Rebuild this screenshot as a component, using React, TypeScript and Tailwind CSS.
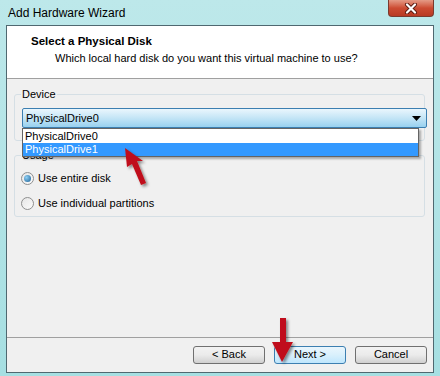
import React from "react";

const Radio = ({ checked }: { checked?: boolean }) => (
  <span className="relative inline-flex w-[13px] h-[13px] rounded-full border border-[#8e8f8f] bg-gradient-to-br from-[#e6e6e6] to-[#fbfbfb] items-center justify-center">
    {checked && (
      <span className="w-[7px] h-[7px] rounded-full bg-[radial-gradient(circle_at_35%_35%,#8fd0f5,#1a5f94)]" />
    )}
  </span>
);

const WinButton = ({ label, focused }: { label: string; focused?: boolean }) => (
  <button
    className={`w-[72px] h-[18px] rounded-[3px] border text-[11px] leading-none text-black flex items-center justify-center ${
      focused
        ? "border-[#3c7fb1] bg-gradient-to-b from-[#eaf6fd] via-[#d9f0fc] to-[#bee6fd]"
        : "border-[#707070] bg-gradient-to-b from-[#f2f2f2] via-[#ebebeb] to-[#d0d0d0]"
    }`}
  >
    {label}
  </button>
);

export default function App() {
  return (
    <div
      className="relative w-[440px] h-[376px] overflow-hidden bg-gradient-to-b from-[#bde8ea] to-[#a6dfe2] text-[11px] text-black"
      style={{ fontFamily: '"Liberation Sans", Arial, sans-serif' }}
    >
      {/* Title bar */}
      <div className="h-[25px] flex items-center pl-[8px] text-[12px] text-black">Add Hardware Wizard</div>
      <div className="absolute top-0 right-[6px] w-[46px] h-[17px] rounded-b-[4px] border border-t-0 border-[#7a3a2e] bg-gradient-to-b from-[#e49a86] via-[#cc4b32] to-[#b83a24] flex items-center justify-center">
        <svg width="14" height="11" viewBox="0 0 14 11">
          <path d="M3 1.5 L11 9.5 M11 1.5 L3 9.5" stroke="#5a1a10" strokeWidth="4" strokeLinecap="round" />
          <path d="M3 1.5 L11 9.5 M11 1.5 L3 9.5" stroke="#fff" strokeWidth="2.2" strokeLinecap="round" />
        </svg>
      </div>

      {/* Client */}
      <div className="mx-[6px] h-[348px] border border-[#4f6870] bg-[#f0f0f0] flex flex-col">
        <div className="h-[53px] bg-white border-b border-[#a0a0a0] pt-[8px]">
          <div className="pl-[24px] font-bold text-[11.5px] leading-[15px]">Select a Physical Disk</div>
          <div className="pl-[48px] pt-[2px] leading-[15px]">Which local hard disk do you want this virtual machine to use?</div>
        </div>

        <div className="relative flex-1 px-[7px] pt-[15px]">
          {/* Device group */}
          <div className="relative h-[47px] rounded-[3px] border border-[#d5dfe5] mr-[1px]">
            <span className="absolute -top-[8px] left-[6px] bg-[#f0f0f0] px-[1px] leading-[14px]">Device</span>
            <div className="absolute top-[13px] left-[7px] right-[-3px] h-[20px] rounded-[2px] border border-[#3c7fb1] bg-gradient-to-b from-[#eaf6fd] via-[#c4e5f6] to-[#98d1ef] flex items-center pl-[3px]">
              <span className="flex-1">PhysicalDrive0</span>
              <svg width="9" height="5" viewBox="0 0 9 5" className="mr-[5px]">
                <path d="M0 0H9L4.5 5Z" fill="#000" />
              </svg>
            </div>
          </div>

          {/* Usage group */}
          <div className="relative mt-[14px] h-[62px] rounded-[3px] border border-[#d5dfe5] mr-[1px]">
            <span className="absolute -top-[8px] left-[6px] bg-[#f0f0f0] px-[1px] leading-[14px]">Usage</span>
            <div className="absolute top-[14px] left-[6px] flex items-center gap-[4px]">
              <Radio checked />
              <span>Use entire disk</span>
            </div>
            <div className="absolute top-[39px] left-[6px] flex items-center gap-[4px]">
              <Radio />
              <span>Use individual partitions</span>
            </div>
          </div>

          {/* Open dropdown list */}
          <div className="absolute top-[49px] left-[15px] w-[397px] border border-[#646464] bg-white shadow-[2px_2px_2px_rgba(0,0,0,0.3)]">
            <div className="h-[14px] leading-[14px] pl-[2px]">PhysicalDrive0</div>
            <div className="h-[13px] leading-[13px] pl-[2px] bg-[#3399ff] text-white">PhysicalDrive1</div>
          </div>
        </div>

        <div className="h-[35px] border-t border-[#a0a0a0] flex items-center justify-end gap-[9px] pr-[6px] pb-[1px]">
          <WinButton label="< Back" />
          <WinButton label="Next >" focused />
          <WinButton label="Cancel" />
        </div>
      </div>

      {/* Red arrows */}
      <svg className="absolute left-0 top-0 pointer-events-none" width="440" height="376" viewBox="0 0 440 376">
        <defs>
          <filter id="sh" x="-50%" y="-50%" width="200%" height="200%">
            <feDropShadow dx="2" dy="2" stdDeviation="1.5" floodColor="#000" floodOpacity="0.45" />
          </filter>
        </defs>
        <g filter="url(#sh)" fill="#c0101a">
          <path d="M125 148 L127 167 L132 164 L141 185 L146 183 L137 161 L143 161 Z" />
          <path d="M280 318 H286 V342 H293 L282 362 L272 342 H280 Z" />
        </g>
      </svg>
    </div>
  );
}
